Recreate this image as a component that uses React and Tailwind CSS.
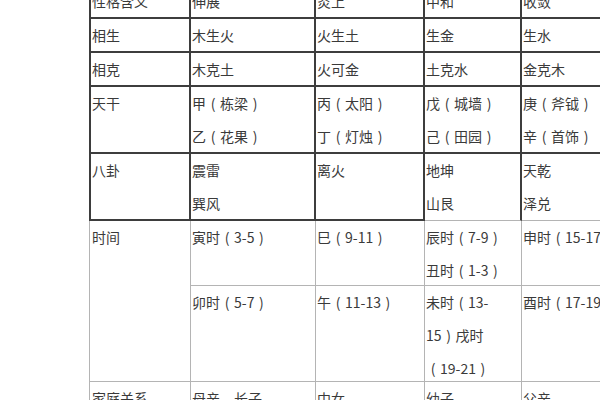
const dark = 'border-r-2 border-b-2 border-[#3d3d3d]';
const darkFirst = 'border-l-2 border-r-2 border-b-2 border-[#3d3d3d]';
const lightRB = 'border-r border-b border-[#b4b4b4]';

const upperRows = [
  ['性格含义', ['伸展'], ['炎上'], ['中和'], ['收敛']],
  ['相生', ['木生火'], ['火生土'], ['生金'], ['生水']],
  ['相克', ['木克土'], ['火可金'], ['土克水'], ['金克木']],
  ['天干', ['甲（栋梁）', '乙（花果）'], ['丙（太阳）', '丁（灯烛）'], ['戊（城墙）', '己（田园）'], ['庚（斧钺）', '辛（首饰）']],
];

// 전각 괄호를 가운데 정렬해서 그림처럼 보이게
function T({ s }) {
  const parts = s.split(/([（）])/);
  return parts.map((p, i) =>
    p === '（' ? <span key={i} className="inline-block w-[14px] text-center">(</span>
    : p === '）' ? <span key={i} className="inline-block w-[14px] text-center">)</span>
    : <span key={i}>{p}</span>
  );
}

function Lines({ lines }) {
  return lines.map((l, i) => <div key={i} className="whitespace-nowrap"><T s={l} /></div>);
}

export default function App() {
  return (
    <div
      className="w-[600px] h-[400px] overflow-hidden bg-white text-[14px] leading-[33px] text-[#3a3a3a]"
      style={{ fontFamily: '"Noto Sans CJK SC", "Noto Sans", sans-serif' }}
    >
      <div className="ml-[89px] mt-[-15px] grid w-[620px] grid-cols-[102px_125px_109px_97px_187px] grid-rows-[34px_34px_34px_67px_67px_65px_96px_40px]">
        {upperRows.map((row, r) => (
          <div key={r} className="contents">
            <div className={`${darkFirst} pl-px`}>{row[0]}</div>
            {row.slice(1).map((c, i) => (
              <div key={i} className={`${dark} pl-px overflow-hidden`}>
                <Lines lines={c} />
              </div>
            ))}
          </div>
        ))}

        {/* 八卦 */}
        <div className={`${darkFirst} pl-px`}>八卦</div>
        <div className={`${dark} pl-px`}><Lines lines={['震雷', '巽风']} /></div>
        <div className={`${dark} pl-px`}>离火</div>
        <div className="border-r-2 border-[#3d3d3d] border-b border-b-[#b4b4b4] pl-px"><Lines lines={['地坤', '山艮']} /></div>
        <div className="border-r-2 border-[#3d3d3d] border-b border-b-[#b4b4b4] pl-px"><Lines lines={['天乾', '泽兑']} /></div>

        {/* 时间 */}
        <div className="row-span-2 border-l border-r border-b border-[#b4b4b4] pl-[2px] pr-px">时间</div>
        <div className={`${lightRB} pl-px`}><Lines lines={['寅时（3-5）']} /></div>
        <div className={`${lightRB} pl-px`}><Lines lines={['巳（9-11）']} /></div>
        <div className={`${lightRB} pl-px`}><Lines lines={['辰时（7-9）', '丑时（1-3）']} /></div>
        <div className={`${lightRB} pl-px`}><Lines lines={['申时（15-17）']} /></div>

        <div className={`${lightRB} pl-px`}><Lines lines={['卯时（5-7）']} /></div>
        <div className={`${lightRB} pl-px`}><Lines lines={['午（11-13）']} /></div>
        <div className={`${lightRB} pl-px`}><Lines lines={['未时（13-', '15）戌时', '（19-21）']} /></div>
        <div className={`${lightRB} pl-px`}><Lines lines={['酉时（17-19）']} /></div>

        {/* 家庭关系 */}
        <div className="border-l border-r border-[#b4b4b4] pl-[2px]">家庭关系</div>
        <div className="border-r border-[#b4b4b4] pl-px">母亲、长子</div>
        <div className="border-r border-[#b4b4b4] pl-px">中女</div>
        <div className="border-r border-[#b4b4b4] pl-px">幼子</div>
        <div className="border-r border-[#b4b4b4] pl-px">父亲</div>
      </div>
    </div>
  );
}
